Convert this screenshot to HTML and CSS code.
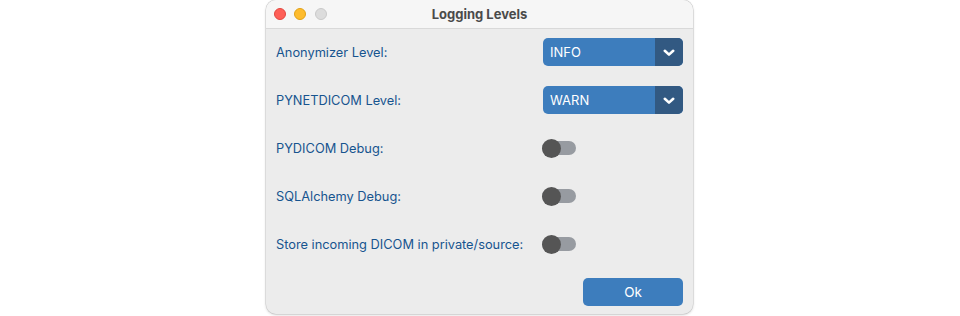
FILE: index.html
```html
<!DOCTYPE html>
<html>
<head>
<meta charset="utf-8">
<link rel="stylesheet" href="styles.css">
</head>
<body>
<div class="stage">
  <div class="window">
    <div class="titlebar">
      <div class="lights">
        <span class="light red"></span>
        <span class="light yellow"></span>
        <span class="light grey"></span>
      </div>
      <div class="title">Logging Levels</div>
    </div>
    <div class="content">
      <div class="row">
        <span class="label">Anonymizer Level:</span>
        <div class="select"><span class="value">INFO</span><span class="arrow"><svg width="12" height="8" viewBox="0 0 12 8"><path d="M1.8 1.8 L6 5.6 L10.2 1.8" fill="none" stroke="#fff" stroke-width="2.6" stroke-linecap="round" stroke-linejoin="round"/></svg></span></div>
      </div>
      <div class="row">
        <span class="label">PYNETDICOM Level:</span>
        <div class="select"><span class="value">WARN</span><span class="arrow"><svg width="12" height="8" viewBox="0 0 12 8"><path d="M1.8 1.8 L6 5.6 L10.2 1.8" fill="none" stroke="#fff" stroke-width="2.6" stroke-linecap="round" stroke-linejoin="round"/></svg></span></div>
      </div>
      <div class="row">
        <span class="label">PYDICOM Debug:</span>
        <div class="toggle-cell"><span class="toggle"><span class="knob"></span></span></div>
      </div>
      <div class="row">
        <span class="label">SQLAlchemy Debug:</span>
        <div class="toggle-cell"><span class="toggle"><span class="knob"></span></span></div>
      </div>
      <div class="row">
        <span class="label">Store incoming DICOM in private/source:</span>
        <div class="toggle-cell"><span class="toggle"><span class="knob"></span></span></div>
      </div>
      <div class="footer">
        <button class="ok">Ok</button>
      </div>
    </div>
  </div>
</div>
</body>
</html>
```
FILE: styles.css
```css
html, body {
  margin: 0;
  padding: 0;
  background: #ffffff;
  font-family: Inter, "Liberation Sans", Arial, sans-serif;
}
.stage {
  width: 960px;
  height: 316px;
  display: flex;
  justify-content: flex-start;
  padding-left: 266px;
  box-sizing: border-box;
}
.window {
  width: 427px;
  height: 314px;
  background: #ececec;
  border-radius: 10px;
  overflow: hidden;
  box-shadow: 0 0 0 0.5px #c8c8c8, 0 1px 3px rgba(0,0,0,0.18);
  display: flex;
  flex-direction: column;
}
.titlebar {
  height: 28px;
  background: #f6f6f6;
  border-bottom: 1px solid #d9d9d9;
  display: flex;
  align-items: center;
  position: relative;
  flex: none;
}
.lights {
  display: flex;
  gap: 8px;
  padding-left: 8px;
  position: absolute;
  left: 0;
  top: 8px;
}
.light {
  width: 12px;
  height: 12px;
  border-radius: 50%;
  box-sizing: border-box;
}
.red { background: #fe5f57; border: 0.5px solid #e2463f; }
.yellow { background: #febc2e; border: 0.5px solid #e1a116; }
.grey { background: #dcdcdc; border: 0.5px solid #c9c9c9; margin-left: 1px; }
.title {
  flex: 1;
  text-align: center;
  font-size: 13px;
  font-weight: 700;
  color: #4a4a4a;
}
.content {
  padding: 9px 10px 0 10px;
  display: flex;
  flex-direction: column;
  gap: 20px;
}
.row {
  height: 28px;
  display: flex;
  align-items: center;
  justify-content: space-between;
}
.label {
  font-size: 12.8px;
  color: #17548f;
}
.select {
  width: 140px;
  height: 28px;
  border-radius: 5px;
  background: #3d7dbd;
  display: flex;
  overflow: hidden;
}
.value {
  flex: 1;
  color: #ffffff;
  font-size: 13px;
  padding-left: 7px;
  display: flex;
  align-items: center;
}
.arrow {
  width: 28px;
  background: #325982;
  display: flex;
  align-items: center;
  justify-content: center;
}
.arrow svg { display: block; margin-top: 1px; }
.toggle-cell {
  width: 141px;
  display: flex;
  justify-content: flex-start;
}
.toggle {
  width: 34px;
  height: 14px;
  border-radius: 7px;
  background: #979ba1;
  display: flex;
  align-items: center;
}
.knob {
  width: 19px;
  height: 19px;
  border-radius: 50%;
  background: #555555;
  flex: none;
}
.footer {
  display: flex;
  justify-content: flex-end;
}
.ok {
  width: 100px;
  height: 28px;
  border: none;
  border-radius: 5px;
  background: #3d7dbd;
  color: #ffffff;
  font-family: inherit;
  font-size: 13.5px;
  padding: 0;
}
```
